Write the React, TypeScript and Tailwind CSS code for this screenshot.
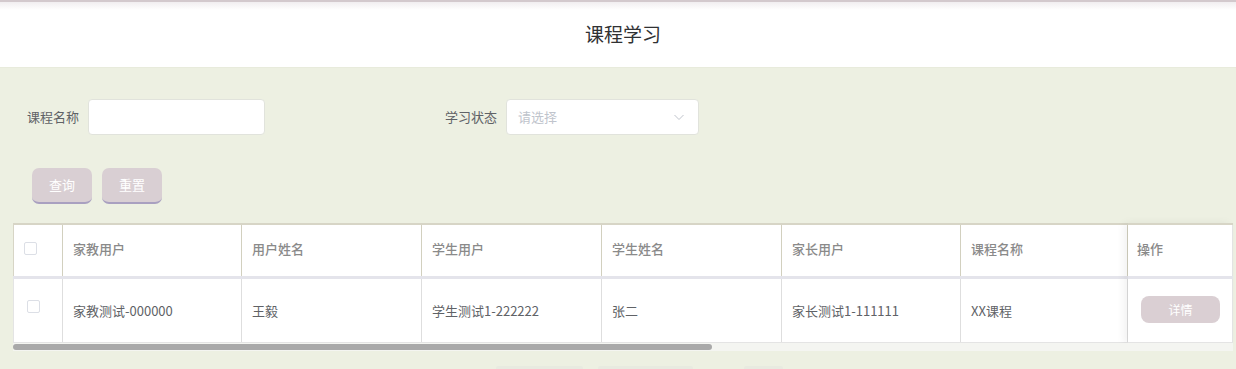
import React from "react";

const cols = [
  { w: 49, label: "", value: "" },
  { w: 179, label: "家教用户", value: "家教测试-000000" },
  { w: 180, label: "用户姓名", value: "王毅" },
  { w: 180, label: "学生用户", value: "学生测试1-222222" },
  { w: 180, label: "学生姓名", value: "张二" },
  { w: 179, label: "家长用户", value: "家长测试1-111111" },
  { w: 167, label: "课程名称", value: "XX课程" },
];

function Checkbox({ className }: { className?: string }) {
  return (
    <span
      className={
        "block w-[13px] h-[13px] rounded-[2px] border border-[#dcdfe6] bg-white " +
        (className || "")
      }
    />
  );
}

export default function App() {
  return (
    <div
      className="w-[1236px] h-[369px] overflow-hidden bg-[#edf0e2] relative"
      style={{ fontFamily: '"Noto Sans CJK SC", "Liberation Sans", sans-serif' }}
    >
      {/* header */}
      <div className="h-[68px] bg-white relative flex items-center justify-center border-b border-[#e8ebdc]">
        <div className="absolute left-0 right-0 top-0 h-[2px] bg-[#d3c9cd]" />
        <div className="absolute left-0 right-0 top-[2px] h-[8px] bg-gradient-to-b from-[#f1eef0] to-white" />
        <span className="text-[19px] text-[#303133] mt-[2px] ml-[10px]">课程学习</span>
      </div>

      {/* filter */}
      <div className="flex items-center pt-[31px] h-[67px]">
        <span className="ml-[27px] text-[13px] text-[#606266] w-[61px]">课程名称</span>
        <div className="w-[177px] h-[36px] bg-white border border-[#e1e3dc] rounded-[4px]" />
        <span className="ml-[180px] text-[13px] text-[#606266] w-[61px]">学习状态</span>
        <div className="w-[193px] h-[36px] bg-white border border-[#e1e3dc] rounded-[4px] flex items-center justify-between px-[11px]">
          <span className="text-[13px] text-[#c0c4cc]">请选择</span>
          <svg width="12" height="12" viewBox="0 0 12 12" className="mr-[2px]">
            <path d="M1.5 4 L6 8.5 L10.5 4" fill="none" stroke="#c0c4cc" strokeWidth="1" />
          </svg>
        </div>
      </div>

      {/* buttons */}
      <div className="flex gap-[10px] ml-[32px] mt-[33px]">
        <button className="w-[60px] h-[36px] rounded-[7px] bg-[#d9cfd3] border-b-2 border-[#a9a0c0] text-white text-[13px]">
          查询
        </button>
        <button className="w-[60px] h-[36px] rounded-[7px] bg-[#d9cfd3] border-b-2 border-[#a9a0c0] text-white text-[13px]">
          重置
        </button>
      </div>

      {/* table */}
      <div className="ml-[13px] mt-[19px] w-[1220px] bg-white relative">
        {/* header row */}
        <div className="flex h-[53px] border-t-2 border-l border-[#d7d5c6]">
          {cols.map((c, i) => (
            <div
              key={i}
              style={{ width: c.w }}
              className="shrink-0 border-r-[1.5px] border-[#d2d0bf] flex items-center pl-[10px] text-[13px] font-medium text-[#8a8a8a]"
            >
              {i === 0 ? <Checkbox className="-mt-[5px]" /> : <span className="-mt-[3px]">{c.label}</span>}
            </div>
          ))}
          <div className="w-[105px] shrink-0 flex items-center pl-[9px] text-[13px] font-medium text-[#8a8a8a] border-r border-[#e3e3e3]">
            <span className="-mt-[3px]">操作</span>
          </div>
        </div>
        <div className="h-[3px] bg-[#e4e4eb]" />
        {/* body row */}
        <div className="flex h-[64px] border-l border-[#e4e4e4] border-b border-b-[#e4e4e4]">
          {cols.map((c, i) => (
            <div
              key={i}
              style={{ width: c.w }}
              className="shrink-0 border-r-[1.5px] border-[#dedede] flex items-center pl-[10px] text-[13px] text-[#606266]"
            >
              {i === 0 ? <Checkbox className="ml-[3px] -mt-[9px]" /> : <span>{c.value}</span>}
            </div>
          ))}
          <div className="w-[105px] shrink-0 flex items-center justify-center border-r border-[#e3e3e3]">
            <button className="w-[79px] h-[27px] rounded-[8px] bg-[#dacfd3] text-white text-[12px] -mt-[2px] ml-[1px]">
              详情
            </button>
          </div>
        </div>
        {/* fixed column shadow */}
        <div className="absolute right-0 top-0 w-[105px] h-[121px] pointer-events-none shadow-[-4px_0_8px_rgba(0,0,0,0.06)]" />
        {/* scrollbar */}
        <div className="h-[8px] bg-[#f4f5f1] relative">
          <div className="absolute left-0 top-[1px] h-[6px] w-[699px] rounded-full bg-[#a9a9a9]" />
        </div>
      </div>

      {/* pagination hint */}
      <div className="absolute top-[366px] left-[496px] w-[87px] h-[4px] bg-[#e8eae0] rounded-[2px]" />
      <div className="absolute top-[366px] left-[598px] w-[95px] h-[4px] bg-[#e8eae0] rounded-[2px]" />
      <div className="absolute top-[366px] left-[744px] w-[39px] h-[4px] bg-[#e8eae0] rounded-[2px]" />
    </div>
  );
}
